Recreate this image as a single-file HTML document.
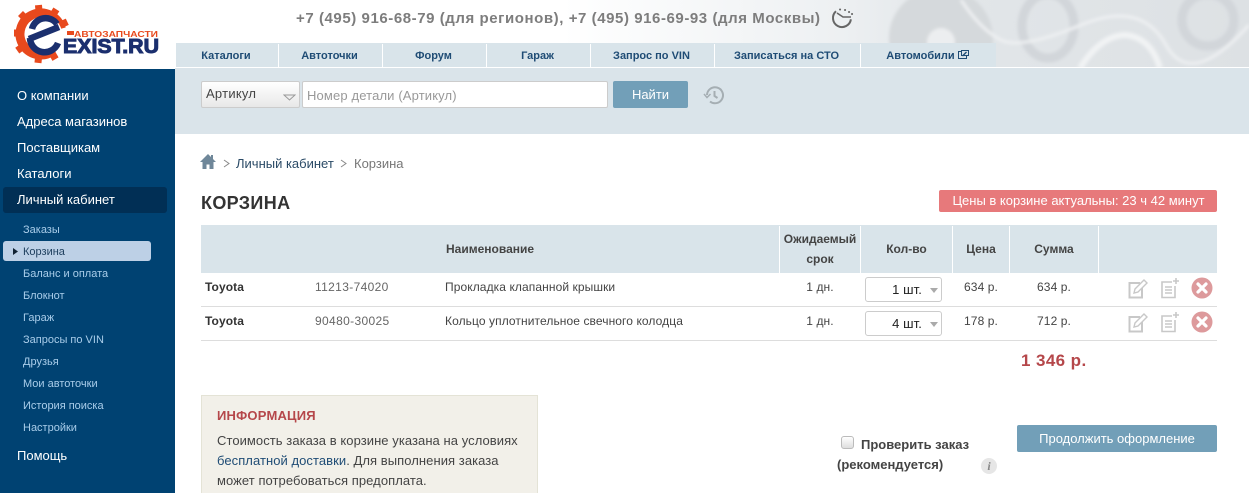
<!DOCTYPE html>
<html><head><meta charset="utf-8"><style>
*{box-sizing:border-box}
html,body{margin:0;padding:0;width:1249px;height:493px;overflow:hidden;background:#fff;font-family:"Liberation Sans",sans-serif;}
.a{position:absolute;white-space:nowrap}
.m{color:#fff;font-size:13px;left:17px}
.s{color:#a9cdea;font-size:11px;left:23px}
.n{top:44px;height:23px;line-height:24px;font-size:11px;font-weight:bold;color:#1f4c75;text-align:center;border-right:1px solid #fff;padding-right:2px}
.t{font-size:12px;color:#444;letter-spacing:.09px}
.g{color:#666;letter-spacing:.35px}
.h{font-size:12px;font-weight:bold;color:#444;text-align:center;line-height:20px}
.v{top:226px;width:1px;height:47px;background:#fff}
</style></head><body>
<svg class="a" style="left:176px;top:0" width="1073" height="68" viewBox="0 0 1073 68">
<defs><linearGradient id="bg" x1="0" x2="1"><stop offset=".36" stop-color="#fff"/><stop offset=".62" stop-color="#edf0f2"/><stop offset=".72" stop-color="#e2e6e9"/><stop offset="1" stop-color="#dde1e4"/></linearGradient><filter id="b"><feGaussianBlur stdDeviation="1.5"/></filter></defs>
<rect width="1073" height="68" fill="url(#bg)"/>
<g filter="url(#b)">
<ellipse cx="765" cy="38" rx="52" ry="50" fill="#d5d9dc"/>
<circle cx="765" cy="42" r="14" fill="#eceef0"/>
<ellipse cx="872" cy="26" rx="26" ry="32" fill="none" stroke="#d2d6da" stroke-width="9"/>
<ellipse cx="1032" cy="20" rx="26" ry="26" fill="none" stroke="#d2d6da" stroke-width="9"/>
<path d="M785 0Q805 30 825 40T905 25T990 45T1073 25" fill="none" stroke="#eef0f2" stroke-width="3"/>
<path d="M904 68Q925 35 950 35Q975 38 984 68" fill="none" stroke="#f1f3f4" stroke-width="6"/>
</g>
</svg>

<svg class="a" style="left:14px;top:4px" width="150" height="60" viewBox="0 0 150 60">
<path d="M47.300 24.600A21 21 0 1 0 39 47.200" fill="none" stroke="#e8491d" stroke-width="9"/>
<g fill="#e8491d" transform="translate(27 30)">
<rect x="-3.500" y="-29" width="7" height="8" transform="rotate(-125)"/>
<rect x="-3.500" y="-29" width="7" height="8" transform="rotate(-88)"/>
<rect x="-3.500" y="-29" width="7" height="8" transform="rotate(-45)"/>
<rect x="-3.500" y="-29" width="7" height="8" transform="rotate(-5)"/>
<rect x="-3.500" y="-29" width="7" height="8" transform="rotate(32)"/>
<rect x="-3.500" y="-29" width="7" height="8" transform="rotate(65)"/>
<rect x="-3.500" y="-29" width="7" height="8" transform="rotate(150)"/>
<rect x="-3.500" y="-29" width="7" height="8" transform="rotate(186)"/>
</g>
<rect x="53" y="27" width="7" height="4" fill="#e8491d"/>
<circle cx="30" cy="30" r="18" fill="#fff"/>
<path d="M18 25A14 14 0 0 1 43 20M15 35L45 23M16 34A14.500 14.500 0 0 0 44 39" fill="none" stroke="#1b2f6e" stroke-width="6.500"/>
<text x="60" y="33" font-family="Liberation Sans" font-size="8.500" font-weight="bold" fill="#e8491d" textLength="84" lengthAdjust="spacingAndGlyphs">АВТОЗАПЧАСТИ</text>
<text x="49" y="49" font-family="Liberation Sans" font-size="20" font-weight="bold" fill="#1b2f6e" textLength="96" lengthAdjust="spacingAndGlyphs" stroke="#1b2f6e" stroke-width="1">EXIST.RU</text>
</svg>

<svg class="a" style="left:290px;top:4px" width="540" height="28"><text x="6" y="19" font-family="Liberation Sans" font-size="15" font-weight="bold" fill="#7d7d7d" textLength="524">+7 (495) 916-68-79 (для регионов), +7 (495) 916-69-93 (для Москвы)</text></svg>
<svg class="a" style="left:830px;top:7px" width="24" height="24" viewBox="0 0 24 24" fill="none" stroke="#666"><path d="M6 4.300A9 9 0 1 0 20.900 12.300" stroke-width="2"/><path d="M7 6L13 10L21 10" stroke-width="1.600"/><path d="M10 2.500h.1M15 3h.1M19 5h.1M22 7h.1" stroke-width="2" stroke-linecap="round"/></svg>

<div class="a" style="left:176px;top:43px;width:820px;height:25px;background:#d9e4ea"></div>
<div class="a" style="left:176px;top:67px;width:1073px;height:1px;background:#fff"></div>
<div class="a n" style="left:176px;width:103px">Каталоги</div>
<div class="a n" style="left:279px;width:104px">Автоточки</div>
<div class="a n" style="left:383px;width:104px">Форум</div>
<div class="a n" style="left:487px;width:104px">Гараж</div>
<div class="a n" style="left:591px;width:124px">Запрос по VIN</div>
<div class="a n" style="left:715px;width:146px">Записаться на СТО</div>
<div class="a n" style="left:861px;width:135px;border:0">Автомобили <svg width="11" height="11" viewBox="0 0 11 11" style="vertical-align:-1px" fill="none" stroke="#1f4c75"><path d="M8.500 6.500v3h-8v-7h3"/><path d="M3.500 1.500h7v5h-7z" stroke-width="1"/><path d="M4.500 7l4-4" stroke-width="1.300"/></svg></div>

<div class="a" style="left:175px;top:68px;width:1074px;height:66px;background:#dae4ea"></div>
<div class="a" style="left:201px;top:81px;width:99px;height:27px;background:linear-gradient(#fff,#e8e8e8);border:1px solid #ccc;border-radius:2px;font-size:13px;line-height:24px;padding-left:4px;color:#444;letter-spacing:.25px">Артикул</div>
<svg class="a" style="left:283px;top:94px" width="13" height="7"><path d="M1 1h11L6.500 6z" fill="#eee" stroke="#999"/></svg>
<div class="a" style="left:302px;top:81px;width:306px;height:27px;background:#fff;border:1px solid #ccc;border-radius:2px;font-size:13px;line-height:28px;padding-left:4px;color:#999;letter-spacing:.14px">Номер детали (Артикул)</div>
<div class="a" style="left:613px;top:81px;width:75px;height:27px;background:#729fb8;border-radius:2px;color:#fff;font-size:13px;line-height:27px;text-align:center">Найти</div>
<svg class="a" style="left:703px;top:85px" width="21" height="20" viewBox="0 0 21 20" fill="none" stroke="#a5aeb3" stroke-width="2"><path d="M4 10a8 8 0 1 1 3 6.500"/><path d="M11.500 6v5l3 2"/><path d="M1 9l3 3.500L7.500 9" stroke-width="1.500"/></svg>

<div class="a" style="left:0;top:69px;width:175px;height:424px;background:#004272"></div>
<div class="a m" style="top:88px">О компании</div>
<div class="a m" style="top:114px">Адреса магазинов</div>
<div class="a m" style="top:140px">Поставщикам</div>
<div class="a m" style="top:166px">Каталоги</div>
<div class="a" style="left:3px;top:187px;width:164px;height:26px;background:#012f55;border-radius:3px"></div>
<div class="a m" style="top:192px">Личный кабинет</div>
<div class="a s" style="top:224px">Заказы</div>
<div class="a" style="left:3px;top:241px;width:148px;height:20px;background:#bdd0e6;border-radius:3px"></div>
<svg class="a" style="left:13px;top:248px" width="5" height="7"><path d="M0 0l5 3.500-5 3.500z" fill="#123"/></svg>
<div class="a s" style="top:246px;color:#1c3d5c">Корзина</div>
<div class="a s" style="top:268px">Баланс и оплата</div>
<div class="a s" style="top:290px">Блокнот</div>
<div class="a s" style="top:312px">Гараж</div>
<div class="a s" style="top:334px">Запросы по VIN</div>
<div class="a s" style="top:356px">Друзья</div>
<div class="a s" style="top:378px">Мои автоточки</div>
<div class="a s" style="top:400px">История поиска</div>
<div class="a s" style="top:422px">Настройки</div>
<div class="a m" style="top:448px">Помощь</div>

<svg class="a" style="left:200px;top:154px" width="16" height="15" viewBox="0 0 16 15"><path d="M8 0L0 8h2.500v7h4v-4.500h3V15h4V8H16l-3-3V1h-2v2z" fill="#6f8799"/></svg>
<svg class="a" style="left:223px;top:159px" width="7" height="9" fill="none" stroke="#888"><path d="M1 1l5 3.500-5 3.500"/></svg>
<div class="a" style="left:236px;top:156px;font-size:13px;color:#2a4a66">Личный кабинет</div>
<svg class="a" style="left:340px;top:159px" width="7" height="9" fill="none" stroke="#888"><path d="M1 1l5 3.500-5 3.500"/></svg>
<div class="a" style="left:354px;top:156px;font-size:13px;color:#777">Корзина</div>

<div class="a" style="left:201px;top:192px;font:bold 18px/22px 'Liberation Sans';color:#333;letter-spacing:.35px">КОРЗИНА</div>
<div class="a" style="left:939px;top:190px;width:278px;height:22px;background:#e7797b;border-radius:2px;color:#fff;font-size:13px;line-height:22px;text-align:center;padding-left:1px">Цены в корзине актуальны: 23 ч 42 минут</div>

<div class="a" style="left:201px;top:225px;width:1016px;height:48px;background:#d9e4ea"></div>
<div class="a v" style="left:779px"></div><div class="a v" style="left:860px"></div><div class="a v" style="left:952px"></div><div class="a v" style="left:1009px"></div><div class="a v" style="left:1098px"></div>
<div class="a h" style="left:446px;top:239px">Наименование</div>
<div class="a h" style="left:780px;top:229px;width:80px;line-height:20px;white-space:normal">Ожидаемый срок</div>
<div class="a h" style="left:861px;top:239px;width:91px">Кол-во</div>
<div class="a h" style="left:953px;top:239px;width:56px">Цена</div>
<div class="a h" style="left:1010px;top:239px;width:88px">Сумма</div>

<div class="a t" style="left:205px;top:280px;font-weight:bold;color:#333">Toyota</div>
<div class="a t g" style="left:315px;top:280px">11213-74020</div>
<div class="a t" style="left:445px;top:280px">Прокладка клапанной крышки</div>
<div class="a t" style="left:780px;top:280px;width:80px;text-align:center">1 дн.</div>
<div class="a" style="left:865px;top:277px;width:77px;height:25px;border:1px solid #ccc;border-radius:3px"></div>
<div class="a t" style="left:865px;top:282px;width:57px;text-align:right;color:#222;font-size:13px">1 шт.</div>
<svg class="a" style="left:930px;top:288px" width="8" height="5"><path d="M0 0h8L4 5z" fill="#aaa"/></svg>
<div class="a t" style="left:953px;top:280px;width:56px;text-align:center">634 р.</div>
<div class="a t" style="left:1010px;top:280px;width:88px;text-align:center">634 р.</div>

<div class="a" style="left:201px;top:306px;width:1016px;height:1px;background:#ddd"></div>

<div class="a t" style="left:205px;top:314px;font-weight:bold;color:#333">Toyota</div>
<div class="a t g" style="left:315px;top:314px">90480-30025</div>
<div class="a t" style="left:445px;top:314px">Кольцо уплотнительное свечного колодца</div>
<div class="a t" style="left:780px;top:314px;width:80px;text-align:center">1 дн.</div>
<div class="a" style="left:865px;top:311px;width:77px;height:25px;border:1px solid #ccc;border-radius:3px"></div>
<div class="a t" style="left:865px;top:316px;width:57px;text-align:right;color:#222;font-size:13px">4 шт.</div>
<svg class="a" style="left:930px;top:322px" width="8" height="5"><path d="M0 0h8L4 5z" fill="#aaa"/></svg>
<div class="a t" style="left:953px;top:314px;width:56px;text-align:center">178 р.</div>
<div class="a t" style="left:1010px;top:314px;width:88px;text-align:center">712 р.</div>
<div class="a" style="left:201px;top:340px;width:1016px;height:1px;background:#ddd"></div>

<svg class="a" style="left:1128px;top:278px" width="20" height="21" viewBox="0 0 20 21" fill="none" stroke="#c8c8c8"><path d="M14 7v12.500H1.500V5H12" stroke-width="2"/><path d="M6 15l1-4 9-9 3 3-9 9z" fill="#fff" stroke-width="1.400"/></svg>
<svg class="a" style="left:1160px;top:278px" width="20" height="21" viewBox="0 0 20 21" fill="none" stroke="#c8c8c8"><path d="M12 4H2v15.500h13V8" stroke-width="1.600"/><path d="M5 9h7M5 12h7M5 15h7" stroke-width="1.400"/><path d="M16 0v6M13 3h6" stroke-width="1.600"/></svg>
<svg class="a" style="left:1191px;top:277px" width="22" height="22" viewBox="0 0 22 22"><circle cx="11" cy="11" r="10.500" fill="#dd9a9c"/><path d="M7 7l8 8M15 7l-8 8" stroke="#fff" stroke-width="3.200" stroke-linecap="round"/></svg>
<svg class="a" style="left:1128px;top:312px" width="20" height="21" viewBox="0 0 20 21" fill="none" stroke="#c8c8c8"><path d="M14 7v12.500H1.500V5H12" stroke-width="2"/><path d="M6 15l1-4 9-9 3 3-9 9z" fill="#fff" stroke-width="1.400"/></svg>
<svg class="a" style="left:1160px;top:312px" width="20" height="21" viewBox="0 0 20 21" fill="none" stroke="#c8c8c8"><path d="M12 4H2v15.500h13V8" stroke-width="1.600"/><path d="M5 9h7M5 12h7M5 15h7" stroke-width="1.400"/><path d="M16 0v6M13 3h6" stroke-width="1.600"/></svg>
<svg class="a" style="left:1191px;top:311px" width="22" height="22" viewBox="0 0 22 22"><circle cx="11" cy="11" r="10.500" fill="#dd9a9c"/><path d="M7 7l8 8M15 7l-8 8" stroke="#fff" stroke-width="3.200" stroke-linecap="round"/></svg>

<div class="a" style="left:1021px;top:351px;font-size:17px;line-height:20px;font-weight:bold;color:#b5474a;letter-spacing:.4px">1 346 р.</div>

<div class="a" style="left:201px;top:395px;width:337px;height:98px;background:#f2f0e9;border:1px solid #e4e3d6;border-bottom:0"></div>
<div class="a" style="left:217px;top:408px;font-size:13px;line-height:15px;font-weight:bold;color:#b5474a;letter-spacing:.2px">ИНФОРМАЦИЯ</div>
<div class="a" style="left:217px;top:431px;font-size:13px;line-height:20px;color:#444;letter-spacing:.06px">Стоимость заказа в корзине указана на условиях<br><span style="color:#1f4c75">бесплатной доставки</span>. Для выполнения заказа<br>может потребоваться предоплата.</div>

<div class="a" style="left:841px;top:436px;width:13px;height:13px;border:1px solid #bbb;border-radius:3px;background:linear-gradient(#fff,#ddd)"></div>
<div class="a" style="left:861px;top:435px;font-size:13px;line-height:20px;font-weight:bold;color:#444">Проверить заказ</div>
<div class="a" style="left:837px;top:455px;font-size:13px;line-height:20px;font-weight:bold;color:#444">(рекомендуется)</div>
<div class="a" style="left:981px;top:458px;width:16px;height:16px;border-radius:50%;background:#e6e6e6;color:#888;font:italic bold 12px/16px 'Liberation Serif';text-align:center">i</div>
<div class="a" style="left:1017px;top:425px;width:200px;height:27px;background:#729fb8;border-radius:2px;color:#fff;font-size:13px;line-height:27px;text-align:center">Продолжить оформление</div>
</body></html>
